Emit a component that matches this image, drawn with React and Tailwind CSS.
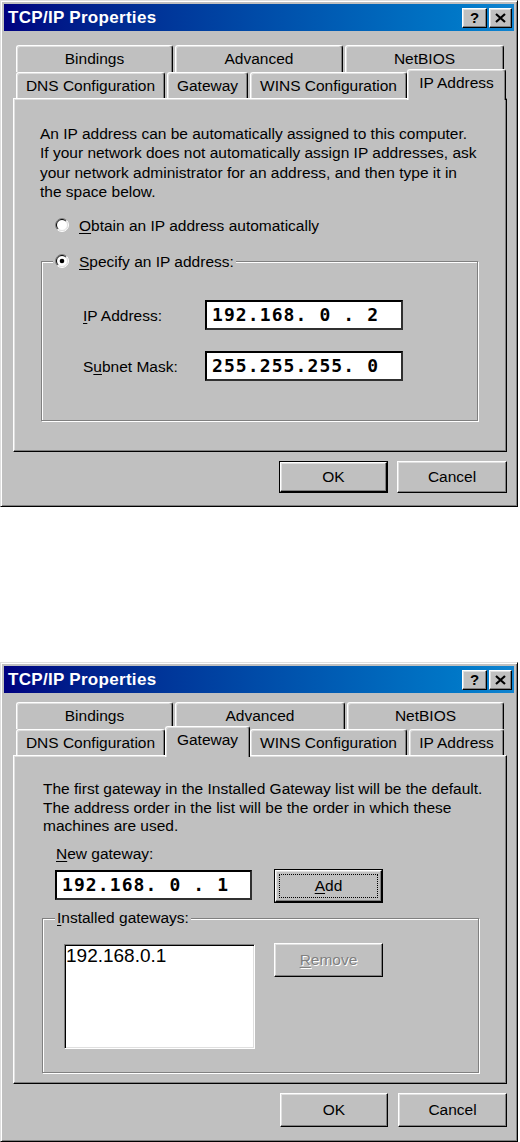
import React from 'react';

// Win98-style bevels
const raised =
  'border border-t-white border-l-white border-r-black border-b-black shadow-[inset_-1px_-1px_0_#808080,inset_1px_1px_0_#dfdfdf]';
const sunken =
  'border border-t-[#808080] border-l-[#808080] border-r-white border-b-white shadow-[inset_1px_1px_0_#000,inset_-1px_-1px_0_#dfdfdf]';
const etched = 'border border-[#808080] shadow-[1px_1px_0_#fff,inset_1px_1px_0_#fff]';
const ui = "font-['Liberation_Sans',Arial,sans-serif] text-[15.5px] text-black";

const Radio = ({ checked }) => (
  <svg width="14" height="14" viewBox="0 0 14 14" className="shrink-0">
    <circle cx="7" cy="7" r="6" fill="#fff" />
    <path d="M2.4 11.6 A6.5 6.5 0 0 1 11.6 2.4" stroke="#808080" fill="none" />
    <path d="M11.6 2.4 A6.5 6.5 0 0 1 2.4 11.6" stroke="#fff" fill="none" />
    <path d="M3.1 10.9 A5.5 5.5 0 0 1 10.9 3.1" stroke="#000" fill="none" />
    <path d="M10.9 3.1 A5.5 5.5 0 0 1 3.1 10.9" stroke="#dfdfdf" fill="none" />
    {checked && <circle cx="7" cy="7" r="2.3" fill="#000" />}
  </svg>
);

const U = ({ children }) => <span className="underline underline-offset-[2px]">{children}</span>;

const TitleBar = () => (
  <div className="h-[27px] shrink-0 bg-linear-to-r from-[#000080] to-[#1084d0] flex items-center pl-[4px] pr-[2px]">
    <span className="font-['Liberation_Sans',Arial,sans-serif] font-bold text-[17px] text-white tracking-[0.3px]">
      TCP/IP Properties
    </span>
    <div className="ml-auto flex gap-[2px]">
      <div className={`${raised} w-[25px] h-[20px] bg-[#c0c0c0] flex items-center justify-center`}>
        <span className="font-['Liberation_Sans',Arial,sans-serif] font-bold text-[15px] leading-none text-black">?</span>
      </div>
      <div className={`${raised} w-[23px] h-[20px] bg-[#c0c0c0] flex items-center justify-center`}>
        <svg width="11" height="10" viewBox="0 0 11 10">
          <path d="M1 1 L10 9 M10 1 L1 9" stroke="#000" strokeWidth="2.2" fill="none" />
        </svg>
      </div>
    </div>
  </div>
);

const Tab = ({ label, className }) => (
  <div
    className={`${className} h-full bg-[#c0c0c0] border-t border-l border-r border-t-white border-l-white border-r-black rounded-tl-[3px] rounded-tr-[3px] shadow-[inset_-1px_0_0_#808080,inset_1px_1px_0_#dfdfdf] flex items-center justify-center ${ui}`}
  >
    {label}
  </div>
);

const SelTab = ({ label, className }) => (
  <div
    className={`${className} relative z-10 -mx-[2px] -mt-[3px] h-[31px] pb-[4px] bg-[#c0c0c0] border-t border-l border-r border-t-white border-l-white border-r-black rounded-tl-[3px] rounded-tr-[3px] shadow-[inset_-1px_0_0_#808080,inset_1px_1px_0_#dfdfdf] flex items-center justify-center ${ui}`}
  >
    {label}
  </div>
);

const Button = ({ children, className, isDefault, focused, disabled }) => {
  const label = (
    <span className={disabled ? 'text-[#808080] [text-shadow:1px_1px_0_#fff]' : ''}>{children}</span>
  );
  const face = (
    <div className={`${raised} bg-[#c0c0c0] flex-1 flex p-[3px] ${ui}`}>
      <div
        className={`flex-1 flex items-center justify-center border border-dotted ${
          focused ? 'border-black' : 'border-transparent'
        }`}
      >
        {label}
      </div>
    </div>
  );
  if (isDefault) {
    return <div className={`${className} border border-black flex`}>{face}</div>;
  }
  return <div className={`${className} flex`}>{face}</div>;
};

const IpField = ({ value, className }) => (
  <div
    className={`${className} h-[30px] bg-white border-2 border-t-black border-l-black border-r-[#303030] border-b-[#303030] flex items-center pl-[5px]`}
  >
    <span className="font-['DejaVu_Sans_Mono',monospace] font-bold text-[18px] tracking-[1.1px] whitespace-pre leading-none text-black">
      {value}
    </span>
  </div>
);

const IpAddressDialog = () => (
  <div className="w-[518px] h-[507px] shrink-0 bg-[#c0c0c0] border border-t-[#dfdfdf] border-l-[#dfdfdf] border-r-black border-b-black shadow-[inset_1px_1px_0_#fff,inset_-1px_-1px_0_#808080] p-[3px] flex flex-col">
    <TitleBar />
    <div className="mt-[14px] ml-[9px] w-[494px]">
      <div className="flex gap-[2px] ml-[3px] h-[27px]">
        <Tab label="Bindings" className="w-[157px]" />
        <Tab label="Advanced" className="w-[168px]" />
        <Tab label="NetBIOS" className="w-[159px]" />
      </div>
      <div className="flex gap-[2px] ml-[3px] h-[26px] items-start">
        <Tab label="DNS Configuration" className="w-[149px]" />
        <Tab label="Gateway" className="w-[81px]" />
        <Tab label="WINS Configuration" className="w-[157px]" />
        <SelTab label="IP Address" className="w-[99px]" />
      </div>
      <div className={`${raised} bg-[#c0c0c0] h-[354px] pt-[25px] pl-[26px] ${ui}`}>
        <p className="leading-[19.3px] whitespace-nowrap">
          An IP address can be automatically assigned to this computer.
          <br />
          If your network does not automatically assign IP addresses, ask
          <br />
          your network administrator for an address, and then type it in
          <br />
          the space below.
        </p>
        <div className="mt-[14px] ml-[15px] h-[20px] flex items-center gap-[10px]">
          <Radio />
          <span>
            <U>O</U>btain an IP address automatically
          </span>
        </div>
        <div className={`${etched} relative mt-[26px] ml-[1px] w-[437px] h-[160px] pt-[38px] pl-[41px]`}>
          <div className="absolute -top-[11px] left-[11px] h-[20px] px-[2px] bg-[#c0c0c0] flex items-center gap-[10px]">
            <Radio checked />
            <span>
              <U>S</U>pecify an IP address:
            </span>
          </div>
          <div className="flex items-center h-[30px]">
            <span className="w-[122px]">
              <U>I</U>P Address:
            </span>
            <IpField value="192.168. 0 . 2" className="w-[198px]" />
          </div>
          <div className="mt-[21px] flex items-center h-[30px]">
            <span className="w-[122px]">
              S<U>u</U>bnet Mask:
            </span>
            <IpField value="255.255.255. 0" className="w-[198px]" />
          </div>
        </div>
      </div>
    </div>
    <div className="mt-[9px] ml-[9px] w-[494px] flex justify-end gap-[9px]">
      <Button className="w-[109px] h-[32px]" isDefault>
        OK
      </Button>
      <Button className="w-[110px] h-[32px]">Cancel</Button>
    </div>
  </div>
);

const GatewayDialog = () => (
  <div className="mt-[155px] w-[518px] h-[480px] shrink-0 bg-[#c0c0c0] border border-t-[#dfdfdf] border-l-[#dfdfdf] border-r-black border-b-black shadow-[inset_1px_1px_0_#fff,inset_-1px_-1px_0_#808080] p-[3px] flex flex-col">
    <TitleBar />
    <div className="mt-[9px] ml-[9px] w-[494px]">
      <div className="flex gap-[2px] ml-[3px] h-[27px]">
        <Tab label="Bindings" className="w-[157px]" />
        <Tab label="Advanced" className="w-[170px]" />
        <Tab label="NetBIOS" className="w-[157px]" />
      </div>
      <div className="flex gap-[2px] ml-[3px] h-[26px] items-start">
        <Tab label="DNS Configuration" className="w-[149px]" />
        <SelTab label="Gateway" className="w-[85px]" />
        <Tab label="WINS Configuration" className="w-[157px]" />
        <Tab label="IP Address" className="w-[95px]" />
      </div>
      <div className={`${raised} bg-[#c0c0c0] h-[329px] pt-[24px] pl-[28px] ${ui}`}>
        <p className="ml-[1px] leading-[18.5px] whitespace-nowrap">
          The first gateway in the Installed Gateway list will be the default.
          <br />
          The address order in the list will be the order in which these
          <br />
          machines are used.
        </p>
        <div className="mt-[8px] ml-[14px] h-[19px] leading-[19px]">
          <U>N</U>ew gateway:
        </div>
        <div className="mt-[6px] ml-[13px] flex items-start gap-[22px]">
          <IpField value="192.168. 0 . 1" className="mt-[1px] w-[197px]" />
          <Button className="w-[109px] h-[34px]" isDefault focused>
            <U>A</U>dd
          </Button>
        </div>
        <div className={`${etched} relative mt-[15px] w-[437px] h-[155px] pt-[24px] pl-[21px] flex items-start gap-[19px]`}>
          <div className="absolute -top-[11px] left-[12px] h-[20px] px-[2px] bg-[#c0c0c0] flex items-center">
            <span>
              <U>I</U>nstalled gateways:
            </span>
          </div>
          <div className={`${sunken} mt-[1px] w-[191px] h-[105px] bg-white pl-[1px]`}>
            <div className="text-[19px] leading-[22px]">192.168.0.1</div>
          </div>
          <Button className="w-[109px] h-[34px]" disabled>
            <U>R</U>emove
          </Button>
        </div>
      </div>
    </div>
    <div className="mt-[9px] ml-[9px] w-[494px] flex justify-end gap-[10px]">
      <Button className="w-[108px] h-[34px]">OK</Button>
      <Button className="w-[109px] h-[34px]">Cancel</Button>
    </div>
  </div>
);

export default function App() {
  return (
    <div className="w-[520px] h-[1142px] bg-white flex flex-col overflow-hidden">
      <IpAddressDialog />
      <GatewayDialog />
    </div>
  );
}
